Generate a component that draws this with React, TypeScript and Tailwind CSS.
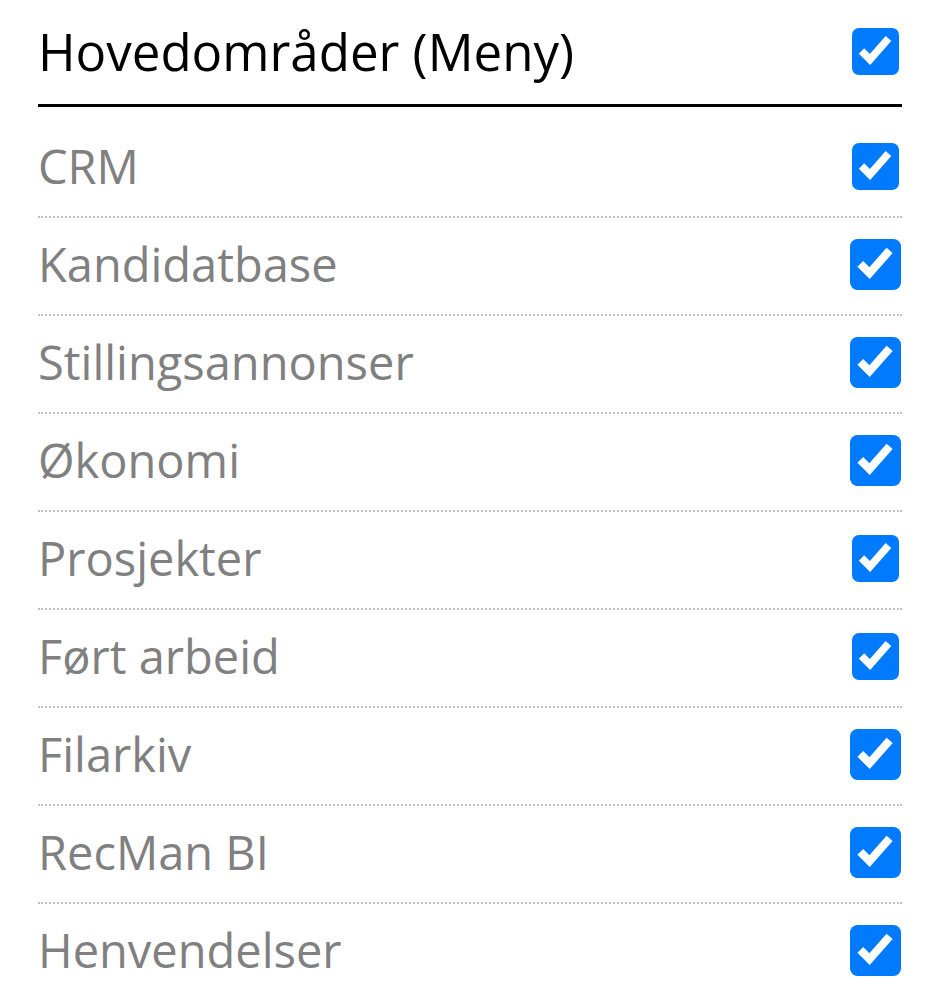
type Item = { label: string; size: number };

const items: Item[] = [
  { label: "CRM", size: 47 },
  { label: "Kandidatbase", size: 51 },
  { label: "Stillingsannonser", size: 51 },
  { label: "Økonomi", size: 51 },
  { label: "Prosjekter", size: 47 },
  { label: "Ført arbeid", size: 47 },
  { label: "Filarkiv", size: 51 },
  { label: "RecMan BI", size: 51 },
  { label: "Henvendelser", size: 51 },
];

function CheckBox({ size }: { size: number }) {
  return (
    <div className="w-[53px] flex justify-center items-center">
      <svg width={size} height={size} viewBox="0 0 47 47">
        <rect x="0" y="0" width="47" height="47" rx="7" fill="#007aff" />
        <polyline
          points="9.5,23 18,31.5 36.5,10.5"
          fill="none"
          stroke="#fff"
          strokeWidth="7.5"
          strokeLinejoin="miter"
        />
      </svg>
    </div>
  );
}

export default function App() {
  return (
    <section className="w-[938px] h-[996px] overflow-hidden bg-white pl-[38px] pr-[36px] font-['Open_Sans',sans-serif]">
      {/* header */}
      <div className="h-[107px] flex items-center justify-between border-b-[3px] border-black pb-[2px]">
        <h2 className="text-[51px] leading-none text-black">
          Hovedområder (Meny)
        </h2>
        <CheckBox size={47} />
      </div>

      <ul className="mt-[13px]">
        {items.map((it) => (
          <li
            key={it.label}
            className="h-[98px] flex items-center justify-between border-b-2 border-dotted border-[#c4c4c4] pb-1"
          >
            <span className="text-[47px] leading-none text-[#808080]">
              {it.label}
            </span>
            <CheckBox size={it.size} />
          </li>
        ))}
      </ul>
    </section>
  );
}
